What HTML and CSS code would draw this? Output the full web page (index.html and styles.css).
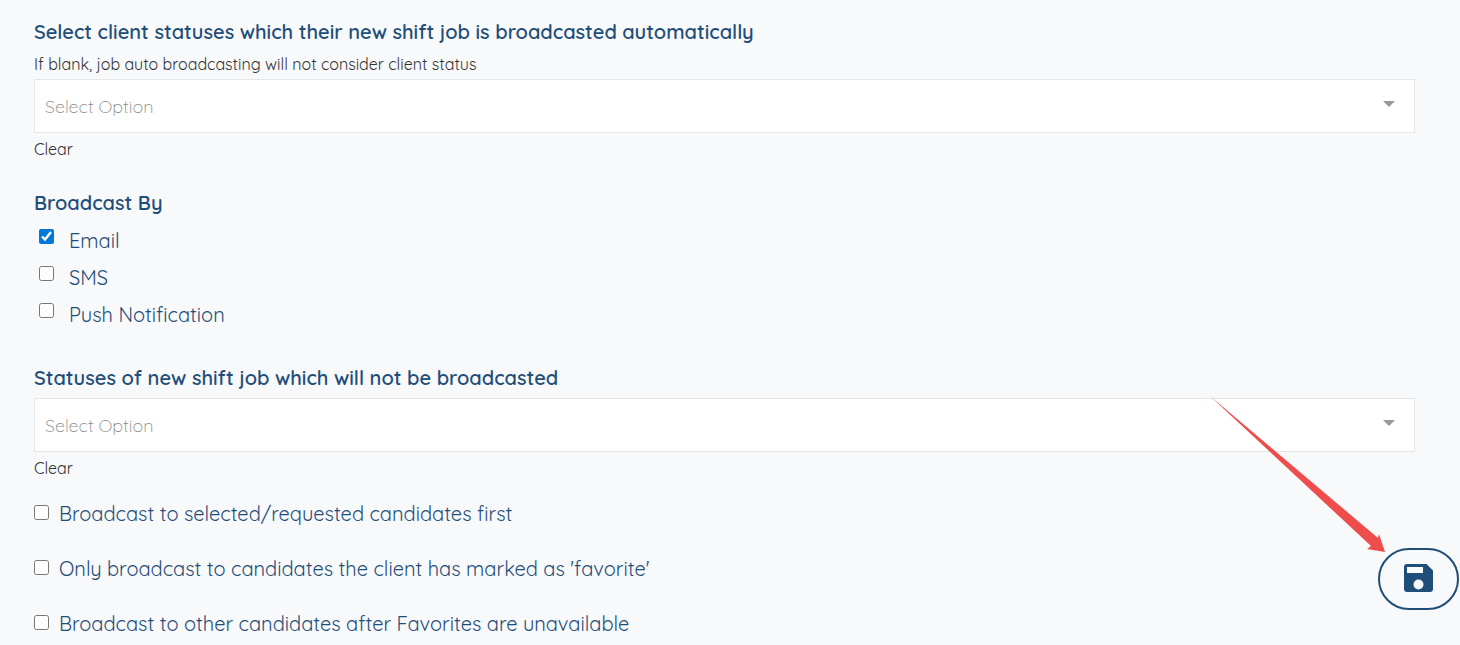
FILE: index.html
```
<!DOCTYPE html>
<html lang="en">
<head>
    <meta charset="UTF-8">
    <meta name="viewport" content="width=device-width, initial-scale=1.0">
    <title>Job Broadcast Settings</title>
    <link rel="stylesheet" href="styles.css">
</head>
<body>
    <form class="settings">
        <!-- Client statuses -->
        <div class="field">
            <label class="title" for="client-status">Select client statuses which their new shift job is broadcasted automatically</label>
            <p class="hint">If blank, job auto broadcasting will not consider client status</p>
            <div class="select-box">
                <select id="client-status">
                    <option>Select Option</option>
                </select>
                <svg class="caret" viewBox="0 0 12 6"><path d="M0 0h12L6 6z"/></svg>
            </div>
            <button type="button" class="clear">Clear</button>
        </div>

        <!-- Broadcast channels -->
        <fieldset class="channels">
            <legend class="title">Broadcast By</legend>
            <label class="check"><input type="checkbox" checked> <span>Email</span></label>
            <label class="check"><input type="checkbox"> <span>SMS</span></label>
            <label class="check"><input type="checkbox"> <span>Push Notification</span></label>
        </fieldset>

        <!-- Job statuses -->
        <div class="field">
            <label class="title" for="job-status">Statuses of new shift job which will not be broadcasted</label>
            <div class="select-box">
                <select id="job-status">
                    <option>Select Option</option>
                </select>
                <svg class="caret" viewBox="0 0 12 6"><path d="M0 0h12L6 6z"/></svg>
            </div>
            <button type="button" class="clear">Clear</button>
        </div>

        <div class="options">
            <label class="check"><input type="checkbox"> <span>Broadcast to selected/requested candidates first</span></label>
            <label class="check"><input type="checkbox"> <span>Only broadcast to candidates the client has marked as 'favorite'</span></label>
            <label class="check"><input type="checkbox"> <span>Broadcast to other candidates after Favorites are unavailable</span></label>
        </div>

        <button type="submit" class="save" aria-label="Save">
            <svg viewBox="0 0 30 30">
                <path fill-rule="evenodd" d="M3 0h19.500L29 6.500V25a3 3 0 0 1-3 3H3a3 3 0 0 1-3-3V3A3 3 0 0 1 3 0zM3 3v6h16V3zM14.500 15.500a5 5 0 1 0 0 10a5 5 0 1 0 0-10z"/>
            </svg>
        </button>
    </form>

    <svg class="pointer" viewBox="0 0 176 158">
        <path d="M0 0L168 142L169 138L175 156L157 153L161 150z"/>
    </svg>
</body>
</html>
```

FILE: styles.css
```
/* General Styling */
* {
    box-sizing: border-box;
}

body {
    font-family: Quicksand, Inter, "Liberation Sans", sans-serif;
    margin: 0;
    background-color: #f8f9fb;
    color: #333;
}

.settings {
    padding: 17px 45px 6px 34px;
}

.title {
    display: block;
    padding: 0;
    margin-bottom: 5px;
    font-size: 20px;
    font-weight: 600;
    line-height: 30px;
    color: #1f4e79;
}

.hint {
    margin: 0 0 3px;
    font-size: 16px;
    font-weight: 400;
    line-height: 24px;
}

/* Dropdowns */
.select-box {
    position: relative;
}

.select-box select {
    appearance: none;
    display: block;
    width: 100%;
    height: 54px;
    padding: 0 40px 0 10px;
    border: 1px solid #e5e6e8;
    border-radius: 0;
    background-color: #fff;
    font-family: inherit;
    font-size: 18px;
    font-weight: 300;
    color: #888;
}

.caret {
    position: absolute;
    top: 22px;
    right: 20px;
    width: 12px;
    height: 6px;
    fill: #999;
    pointer-events: none;
}

.clear {
    display: block;
    margin-top: 4px;
    padding: 0;
    border: none;
    background: none;
    font-family: inherit;
    font-size: 16px;
    font-weight: 400;
    line-height: 24px;
    color: #333;
    cursor: pointer;
}

/* Checkboxes */
.channels {
    margin: 27px 0 30px;
    padding: 0 0 0 5px;
    border: none;
}

.channels .title {
    margin: 0 0 4px -5px;
}

.check {
    display: flex;
    gap: 10px;
    width: fit-content;
    font-size: 20px;
    font-weight: 400;
    line-height: 30px;
    color: #1f4e79;
}

.check input {
    flex: none;
    width: 15px;
    height: 15px;
    margin: 6px 0 0;
    accent-color: #0078d7;
}

.channels .check {
    gap: 15px;
    padding: 4px 0 3px;
}

.channels .check input {
    margin-top: 3px;
}

.options {
    display: grid;
    gap: 25px;
    margin-top: 19px;
}

/* Floating save button */
.save {
    position: fixed;
    right: 1px;
    bottom: 35px;
    display: flex;
    align-items: center;
    justify-content: center;
    width: 81px;
    height: 62px;
    padding: 0;
    border: 2px solid #1f4e79;
    border-radius: 31px;
    background-color: #f8f9fb;
    cursor: pointer;
}

.save svg {
    width: 30px;
    height: 30px;
    fill: #1f4e79;
}

.pointer {
    position: fixed;
    right: 74px;
    bottom: 91px;
    width: 176px;
    height: 158px;
    fill: #ee4d4b;
    pointer-events: none;
}
```
